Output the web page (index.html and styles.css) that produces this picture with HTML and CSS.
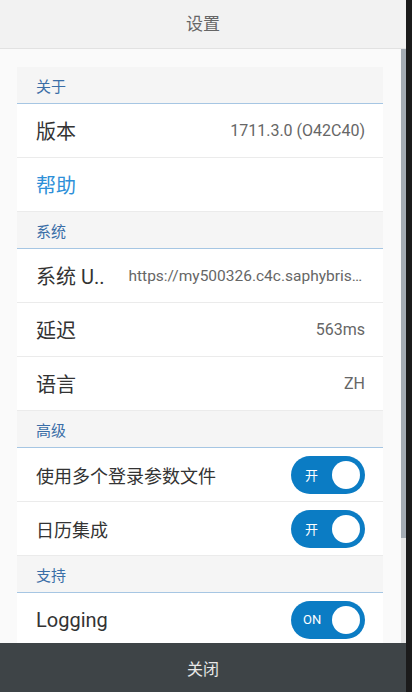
FILE: index.html
```html
<!DOCTYPE html>
<html lang="zh">
<head>
    <meta charset="UTF-8">
    <meta name="viewport" content="width=device-width, initial-scale=1.0">
    <title>设置</title>
    <link rel="stylesheet" href="styles.css">
</head>
<body>
    <div class="screen">
        <div class="dialog">
            <div class="dialog-header">设置</div>
            <div class="dialog-body">
                <div class="content">
                    <div class="list">
                        <div class="section">关于</div>
                        <div class="row">
                            <span class="label">版本</span>
                            <span class="value">1711.3.0 (O42C40)</span>
                        </div>
                        <div class="row">
                            <span class="label link">帮助</span>
                        </div>

                        <div class="section">系统</div>
                        <div class="row">
                            <span class="label short">系统 U..</span>
                            <span class="value url">https://my500326.c4c.saphybris.com</span>
                        </div>
                        <div class="row">
                            <span class="label">延迟</span>
                            <span class="value">563ms</span>
                        </div>
                        <div class="row">
                            <span class="label">语言</span>
                            <span class="value">ZH</span>
                        </div>

                        <div class="section">高级</div>
                        <div class="row">
                            <span class="label small">使用多个登录参数文件</span>
                            <div class="switch"><span class="switch-text">开</span><span class="knob"></span></div>
                        </div>
                        <div class="row">
                            <span class="label small">日历集成</span>
                            <div class="switch"><span class="switch-text">开</span><span class="knob"></span></div>
                        </div>

                        <div class="section">支持</div>
                        <div class="row">
                            <span class="label">Logging</span>
                            <div class="switch"><span class="switch-text latin">ON</span><span class="knob"></span></div>
                        </div>
                    </div>
                </div>
                <div class="scrollbar"><div class="thumb"></div></div>
            </div>
            <div class="dialog-footer">关闭</div>
        </div>
        <div class="edge"></div>
    </div>
</body>
</html>
```

FILE: styles.css
```css
html, body {
    margin: 0;
    height: 100%;
}
body {
    font-family: Roboto, "Noto Sans CJK SC", sans-serif;
    background: #1b1b1b;
    overflow: hidden;
}
.screen {
    display: flex;
    height: 692px;
    width: 412px;
}
.dialog {
    width: 406px;
    display: flex;
    flex-direction: column;
}
.edge {
    flex: 1;
    background: #1b1b1b;
}
.dialog-header {
    height: 45px;
    padding-bottom: 3px;
    flex-shrink: 0;
    background: #f2f2f2;
    border-bottom: 1px solid #e2e2e2;
    color: #666;
    font-size: 17px;
    display: flex;
    align-items: center;
    justify-content: center;
}
.dialog-body {
    flex: 1;
    display: flex;
    min-height: 0;
}
.content {
    flex: 1;
    overflow: hidden;
    background: #fafafa;
    padding: 18px 18px 0 17px;
}
.scrollbar {
    width: 5px;
    background: #e6e6e6;
}
.thumb {
    height: 489px;
    background: #a4acb4;
}
.list {
    background: #fff;
}
.section {
    height: 36px;
    background: #f5f5f5;
    border-bottom: 1px solid #a6c6e3;
    color: #3a6ea7;
    font-size: 15px;
    padding-left: 19px;
    display: flex;
    align-items: center;
}
.row {
    height: 53px;
    border-bottom: 1px solid #ebebeb;
    display: flex;
    align-items: center;
    justify-content: space-between;
    padding: 0 18px 0 19px;
    gap: 24px;
}
.label {
    font-size: 20px;
    color: #333;
    white-space: nowrap;
}
.label.small {
    font-size: 18px;
}
.label.short {
    flex-shrink: 0;
}
.link {
    color: #2e90d8;
}
.value {
    font-size: 16px;
    color: #666;
    white-space: nowrap;
}
.url {
    font-size: 15.5px;
    overflow: hidden;
    text-overflow: ellipsis;
    min-width: 0;
}
.switch {
    width: 74px;
    height: 38px;
    border-radius: 19px;
    background: #0b7cc4;
    box-sizing: border-box;
    padding: 0 5px 0 14px;
    display: flex;
    align-items: center;
    justify-content: space-between;
    flex-shrink: 0;
}
.switch-text {
    color: #fff;
    font-size: 13px;
}
.switch-text.latin {
    margin-left: -2px;
}
.knob {
    width: 28px;
    height: 28px;
    border-radius: 50%;
    background: #fff;
}
.dialog-footer {
    height: 49px;
    flex-shrink: 0;
    background: #3e4447;
    color: #e8e8e8;
    font-size: 16px;
    display: flex;
    align-items: center;
    justify-content: center;
}
```
